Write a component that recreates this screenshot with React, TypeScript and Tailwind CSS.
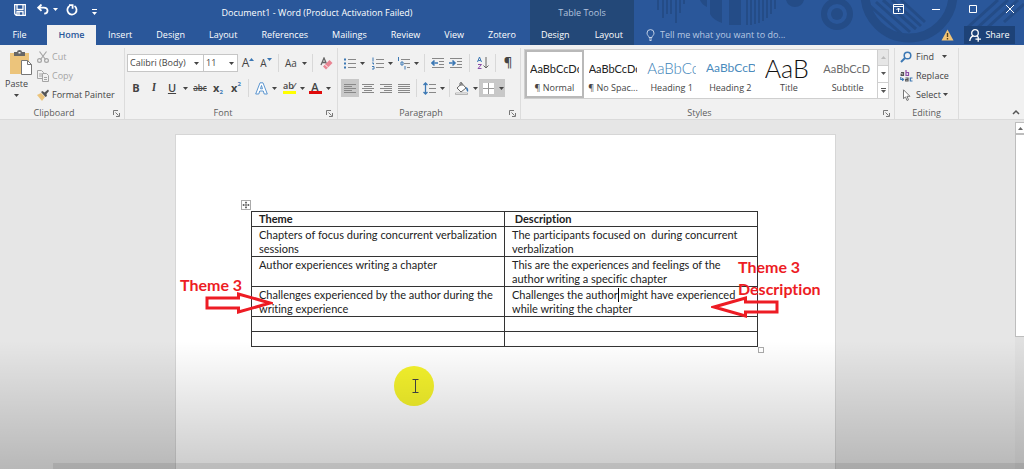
import type { ReactNode } from 'react';
import { clsx } from 'clsx';

/** Small drop-down arrow. */
function Caret({ className }: { className?: string }) {
  return (
    <svg viewBox="0 0 5 3" className={clsx('h-[3px] w-[5px] shrink-0', className)} aria-hidden="true">
      <path d="M0 0h5L2.5 3z" fill="currentColor" />
    </svg>
  );
}

function Tool({
  label,
  className,
  children,
}: {
  label: string;
  className?: string;
  children: ReactNode;
}) {
  return (
    <button
      type="button"
      aria-label={label}
      className={clsx('flex h-[18px] w-[18px] shrink-0 items-center justify-center', className)}
    >
      {children}
    </button>
  );
}

function MoreTool({ label, className }: { label: string; className?: string }) {
  return (
    <button
      type="button"
      aria-label={label}
      className={clsx('flex h-[18px] w-2 shrink-0 items-center justify-center', className)}
    >
      <Caret />
    </button>
  );
}

function Divider({ className }: { className?: string }) {
  return <span className={clsx('h-[18px] w-px shrink-0 bg-[#d8d8d8]', className)} />;
}

/** One ribbon group: content, caption and the optional dialog launcher. */
function Group({
  name,
  launcher,
  className,
  children,
}: {
  name: string;
  launcher?: boolean;
  className?: string;
  children: ReactNode;
}) {
  return (
    <section
      aria-label={name}
      className={clsx('mt-[3px] flex flex-col border-r border-[#dcdcdc]', className)}
    >
      <div className="h-[59px]">{children}</div>
      <div
        className={clsx(
          'relative flex h-3 items-center justify-center text-[#5c5c5c]',
          launcher && 'pr-4',
        )}
      >
        <span>{name}</span>
        {launcher && (
          <button type="button" aria-label={`${name} settings`} className="absolute right-1 bottom-[2px]">
            <svg viewBox="0 0 7 7" className="h-[7px] w-[7px]" fill="none" stroke="#777">
              <path d="M.5 5V.5H5M2.5 2.5l3 3M6.5 3v3.5H3" />
            </svg>
          </button>
        )}
      </div>
    </section>
  );
}

function Lines({ rows }: { rows: [number, number][] }) {
  return (
    <svg viewBox="0 0 12 11" className="h-[11px] w-3" stroke="#888" aria-hidden="true">
      {rows.map(([from, to], i) => (
        <path key={i} d={`M${from} ${i * 2 + 1.5}H${to}`} />
      ))}
    </svg>
  );
}

const TABS = ['Insert', 'Design', 'Layout', 'References', 'Mailings', 'Review', 'View', 'Zotero'];

function Backdrop() {
  return (
    <svg viewBox="0 0 370 45" className="absolute top-0 right-0 h-[45px] w-[370px]" fill="none" aria-hidden="true">
      <g stroke="#244c87" strokeWidth="2">
        <path d="M4 0v10M9 0v18M13 0v14M17 0v14M22 0v23M26 0v13M30 0v4" />
        <path d="M93 0v25M97 0v25M101 0v24M105 0v23M109 0v21M113 0v18M117 0v14M121 0v9" />
      </g>
      <path d="M46 0h7v7q-5-2-7-7zM56 0h12v23q-9-3-12-9zM75 0h12v25H75zM132 0h18q-2 7-9 7t-9-7z" fill="#244c87" />
      <circle cx="183" cy="14" r="13" stroke="#244c87" strokeWidth="6" />
      <circle cx="183" cy="14" r="6" fill="#244c87" />
      <circle cx="255" cy="-6" r="44" stroke="#244c87" strokeWidth="9" />
      <path
        d="M216 6l34 30M222 2l34 30M229 0l33 29M238 0l29 26M247 0l24 22"
        stroke="#244c87"
        strokeWidth="3"
      />
      <path d="M314 27L344 0M322 29L354 0M334 27L364 0M350 22L370 4" stroke="#244c87" strokeWidth="3" />
    </svg>
  );
}

function TitleBar() {
  return (
    <header className="relative flex h-[45px] overflow-hidden bg-[#2a579a] text-white">
      <Backdrop />
      <div className="relative flex w-[530px] shrink-0 flex-col">
        <div className="flex h-[25px] items-center">
          <div className="flex w-[104px] shrink-0 items-center pb-[6px] pl-[14px]">
            <button type="button" aria-label="Save">
              <svg viewBox="0 0 12 12" className="h-3 w-3" fill="none" stroke="#fff" strokeWidth="1.3">
                <path d="M.7.7h10.6v10.6H2.2L.7 9.8zM3 .7v4.6h6V.7M3 11V7.5h6V11M5 8v3" />
              </svg>
            </button>
            <button type="button" aria-label="Undo" className="ml-[11px]">
              <svg viewBox="0 0 12 11" className="h-[11px] w-3" fill="none" stroke="#fff" strokeWidth="1.8">
                <path d="M4.5.5L1.2 3.7l3.3 3.2M1.5 3.7h5.2c5 0 5 5.8.5 6" />
              </svg>
            </button>
            <Caret className="ml-1" />
            <button type="button" aria-label="Repeat" className="ml-2">
              <svg viewBox="0 0 12 12" className="h-3 w-3" fill="none" stroke="#fff" strokeWidth="1.8">
                <path d="M3.6 2A4.6 4.6 0 1 0 8.5 2.1M3 1.2h3.6v3.6" />
              </svg>
            </button>
            <button type="button" aria-label="Customize toolbar" className="mt-1 ml-[14px]">
              <svg viewBox="0 0 5 6" className="h-[6px] w-[5px]" fill="#fff">
                <path d="M0 0h5v1H0zM0 3h5L2.5 6z" />
              </svg>
            </button>
          </div>
          <h1 className="flex-1 text-center font-medium">Document1 - Word (Product Activation Failed)</h1>
        </div>
        <nav className="flex h-5 font-medium">
          <button type="button" className="w-[47px] pr-2 text-center">File</button>
          <button type="button" className="w-[49px] bg-[#f1f1f1] text-center font-semibold text-[#2a579a]">
            Home
          </button>
          <div className="flex flex-1 justify-between pr-[14px] pl-3">
            {TABS.map((tab) => (
              <button type="button" key={tab}>{tab}</button>
            ))}
          </div>
        </nav>
      </div>

      <div className="relative flex w-[104px] shrink-0 flex-col bg-[#234878]">
        <div className="flex h-[25px] items-center justify-center text-[#b3c4de]">Table Tools</div>
        <div className="flex h-5 justify-between px-[11px] font-medium">
          <button type="button">Design</button>
          <button type="button">Layout</button>
        </div>
      </div>

      <div className="relative flex flex-1 flex-col">
        <div className="flex h-[25px] items-start justify-end gap-[27px] pt-1 pr-[9px]">
          <button type="button" aria-label="Ribbon display options">
            <svg viewBox="0 0 11 10" className="h-[10px] w-[11px]" fill="none" stroke="#fff">
              <path d="M.5.5h10v9H.5zM.5 2.5h10M5.5 8V4M3.5 6l2-2 2 2" />
            </svg>
          </button>
          <button type="button" aria-label="Minimize">
            <svg viewBox="0 0 10 10" className="h-[10px] w-[10px]" stroke="#fff">
              <path d="M1 5.5h8" />
            </svg>
          </button>
          <button type="button" aria-label="Maximize">
            <svg viewBox="0 0 10 10" className="h-[10px] w-[10px]" fill="none" stroke="#fff">
              <path d="M1.5 1.5h7v7h-7z" />
            </svg>
          </button>
          <button type="button" aria-label="Close">
            <svg viewBox="0 0 10 10" className="h-[10px] w-[10px]" stroke="#fff">
              <path d="M1 1l8 8M9 1L1 9" />
            </svg>
          </button>
        </div>
        <div className="flex h-5 items-center pr-[9px] pl-3 font-medium">
          <svg viewBox="0 0 9 12" className="h-3 w-[9px] shrink-0" fill="none" stroke="#c3d1e6" aria-hidden="true">
            <path d="M3 8.5C3 7 1 6.3 1 4.1a3.5 3.5 0 0 1 7 0C8 6.3 6 7 6 8.5zM3 10h3M3.5 11.5h2" />
          </svg>
          <input
            aria-label="Tell me what you want to do"
            placeholder="Tell me what you want to do..."
            className="ml-[5px] min-w-0 flex-1 bg-transparent outline-none placeholder:text-[#b7c8e2]"
          />
          <svg viewBox="0 0 13 12" className="mr-[10px] h-3 w-[13px] shrink-0" role="img" aria-label="Warning">
            <path d="M6.5.5L12.5 11.5H.5z" fill="#f3c577" />
            <path d="M6.5 4v4M6.5 9v1.5" stroke="#57421c" strokeWidth="1.4" />
          </svg>
          <button
            type="button"
            className="flex h-[18px] w-[51px] shrink-0 items-center justify-center gap-1 bg-[#1d4277]"
          >
            <svg viewBox="0 0 12 13" className="h-[13px] w-3" fill="none" stroke="#fff" strokeWidth="1.3">
              <circle cx="6" cy="4" r="3.3" />
              <path d="M4.2 6.8C2 7.6 1 9.5.8 12M7.8 7l1 .8M6.5 10.2H12M9.2 7.6v5.2" />
            </svg>
            Share
          </button>
        </div>
      </div>
    </header>
  );
}

function ClipboardGroup() {
  return (
    <Group name="Clipboard" launcher className="w-[125px] shrink-0">
      <div className="flex">
        <button type="button" className="flex w-[33px] flex-col items-center pt-[2px]">
          <svg viewBox="0 0 24 26" className="ml-2 h-[26px] w-6" aria-hidden="true">
            <path d="M1 3h19v21H1z" fill="#ecc47b" />
            <path d="M5 2h3q0-2 2.500-2T13 2h3v4H5z" fill="#666" />
            <path d="M9.5 2h2v1.500h-2z" fill="#eee" />
            <path d="M12.5 10.5h6l4 4v10h-10z" fill="#fff" stroke="#777" />
            <path d="M18.5 10.5v4h4" fill="none" stroke="#777" />
          </svg>
          <span className="pt-[2px] leading-3">Paste</span>
          <Caret className="mt-[4px]" />
        </button>
        <div className="flex flex-col pt-[1px] pl-1">
          <button type="button" className="flex h-[19px] items-center gap-[3px] pb-1 text-[#a5a5a5]">
            <svg viewBox="0 0 12 12" className="h-3 w-3" fill="none" stroke="currentColor" strokeWidth="1.2">
              <path d="M2.5.5l6 8M9.5.5l-6 8" />
              <circle cx="2.5" cy="9.5" r="1.9" />
              <circle cx="9.5" cy="9.5" r="1.9" />
            </svg>
            Cut
          </button>
          <button type="button" className="flex h-[19px] items-center gap-[3px] pb-1 text-[#a5a5a5]">
            <svg viewBox="0 0 12 12" className="h-3 w-3" fill="#f1f1f1" stroke="currentColor">
              <path d="M.5.5h4l2 2v6h-6zM2 4h3M2 6h3" />
              <path d="M5.5 3.5h4l2 2v6h-6zM7 7.5h3M7 9.5h3" />
            </svg>
            Copy
          </button>
          <button type="button" className="flex h-[19px] items-center gap-[3px] pb-1">
            <svg viewBox="0 0 12 12" className="h-3 w-3">
              <path d="M0 6l4-2 4 4-3 4z" fill="#ecc47b" />
              <path d="M4 3l1.500-1 2 1.500L11 .5 12 2 9.500 5l.5 2-1.500 1z" fill="#555" />
            </svg>
            Format Painter
          </button>
        </div>
      </div>
    </Group>
  );
}

function FontGroup() {
  return (
    <Group name="Font" launcher className="w-[213px] shrink-0">
      <div className="flex items-center pt-[6px] pl-[2px]">
        <div className="relative h-[18px] w-[77px] border border-[#c6c6c6] bg-white">
          <select aria-label="Font" className="h-full w-full appearance-none pl-[2px] outline-none">
            <option>Calibri (Body)</option>
          </select>
          <Caret className="pointer-events-none absolute top-[7px] right-1" />
        </div>
        <div className="relative -ml-px h-[18px] w-[35px] border border-[#c6c6c6] bg-white">
          <select aria-label="Font size" className="h-full w-full appearance-none pl-[2px] outline-none">
            <option>11</option>
          </select>
          <Caret className="pointer-events-none absolute top-[7px] right-[3px]" />
        </div>
        <Tool label="Grow font" className="ml-[1px] text-[12px]">
          A<Caret className="mb-2 rotate-180 text-[#3c78b4]" />
        </Tool>
        <Tool label="Shrink font" className="text-[10px]">
          A<Caret className="mb-2 text-[#3c78b4]" />
        </Tool>
        <Divider className="mx-[3px]" />
        <Tool label="Change case" className="text-[10px]">Aa</Tool>
        <MoreTool label="Case options" />
        <Divider className="mx-[4px]" />
        <Tool label="Clear formatting">
          <svg viewBox="0 0 13 13" className="h-[13px] w-[13px]">
            <path d="M1 8l3-7 3 7M2 5.5h4" fill="none" stroke="#666" strokeWidth="1.3" />
            <path d="M3 9.5l6.500-6.500 3 3-6.500 6.500z" fill="#e98593" />
            <path d="M5 7.5l3 3" stroke="#fff" />
          </svg>
        </Tool>
      </div>
      <div className="flex items-center pt-[7px] pl-[2px] text-[11px]">
        <Tool label="Bold" className="font-bold">B</Tool>
        <Tool label="Italic" className="font-serif font-semibold italic">I</Tool>
        <Tool label="Underline" className="font-semibold underline">U</Tool>
        <MoreTool label="Underline options" />
        <Tool label="Strikethrough" className="ml-[2px] text-[8px] font-semibold line-through">abc</Tool>
        <Tool label="Subscript" className="font-bold">
          x<span className="mt-2 text-[6px] leading-none text-[#3c78b4]">2</span>
        </Tool>
        <Tool label="Superscript" className="font-bold">
          x<span className="mb-2 text-[6px] leading-none text-[#3c78b4]">2</span>
        </Tool>
        <Divider className="mx-[3px]" />
        <Tool label="Text effects">
          <svg viewBox="0 0 13 13" className="h-[13px] w-[13px]" fill="#fff" stroke="#5b95cf">
            <path d="M.7 12L5 .8h3L12.3 12H9.2L8.3 9H4.7L3.8 12zM5.5 6.8h2L6.5 3.5z" />
          </svg>
        </Tool>
        <MoreTool label="Effect options" />
        <Tool label="Highlight" className="ml-[2px] flex-col">
          <span className="h-[9px] text-[9px] leading-[8px] font-semibold">ab⁄</span>
          <span className="h-[3px] w-[13px] bg-[#ffff00]" />
        </Tool>
        <MoreTool label="Highlight colours" />
        <Tool label="Font colour" className="flex-col">
          <span className="h-[9px] leading-[9px] font-semibold">A</span>
          <span className="h-[3px] w-[13px] bg-[#e00b0b]" />
        </Tool>
        <MoreTool label="Font colours" />
      </div>
    </Group>
  );
}

function ListIcon({ kind }: { kind: 'bullets' | 'numbers' | 'levels' }) {
  return (
    <svg viewBox="0 0 13 13" className="h-[13px] w-[13px]" aria-hidden="true">
      {kind === 'levels' ? (
        <>
          <path d="M4 2.5h9M7 6.5h6M10 10.5h3" stroke="#888" />
          <path d="M1.5 0v4M4 5h2v3H4zM8 9v3.5" fill="none" stroke="#3c78b4" />
        </>
      ) : (
        <>
          <path d="M5 2.5h8M5 6.5h8M5 10.5h8" stroke="#888" />
          <path
            d={kind === 'bullets' ? 'M1 2.5h2M1 6.5h2M1 10.5h2' : 'M2 .5v4M1 6h1.5v1.5M1 9.5h2v2.5H1'}
            fill="none"
            stroke="#3c78b4"
            strokeWidth={kind === 'bullets' ? 2 : 1}
          />
        </>
      )}
    </svg>
  );
}

function IndentIcon({ increase }: { increase?: boolean }) {
  return (
    <svg viewBox="0 0 14 12" className="h-3 w-[14px]" fill="none" aria-hidden="true">
      <path d="M1 1.5h12M8 4.5h5M8 7.5h5M1 10.5h12" stroke="#888" />
      <path
        d={increase ? 'M0 6h6M3.5 3.5L6 6 3.500 8.500' : 'M1 6h6M3.5 3.5L1 6l2.500 2.500'}
        stroke="#3c78b4"
        strokeWidth="1.6"
      />
    </svg>
  );
}

function ParagraphGroup() {
  return (
    <Group name="Paragraph" launcher className="w-[183px] shrink-0">
      <div className="flex items-center pt-[6px] pl-[2px]">
        <Tool label="Bullets"><ListIcon kind="bullets" /></Tool>
        <MoreTool label="Bullet options" />
        <Tool label="Numbering" className="ml-[2px]"><ListIcon kind="numbers" /></Tool>
        <MoreTool label="Numbering options" />
        <Tool label="Multilevel list"><ListIcon kind="levels" /></Tool>
        <MoreTool label="List options" />
        <Divider className="mx-[4px]" />
        <Tool label="Decrease indent"><IndentIcon /></Tool>
        <Tool label="Increase indent"><IndentIcon increase /></Tool>
        <Divider className="mx-[4px]" />
        <Tool label="Sort">
          <svg viewBox="0 0 12 14" className="h-[14px] w-3" fill="none">
            <path d="M.5 6l2-5 2 5M1.2 4.5h2.6" stroke="#3c78b4" />
            <path d="M1 8.5h3.500L1 12.500h3.500" stroke="#8c4fa8" />
            <path d="M9 1v11M6.5 9.5L9 12l2.500-2.500" stroke="#666" />
          </svg>
        </Tool>
        <Divider className="mx-[3px]" />
        <Tool label="Show marks" className="text-[13px] font-semibold">¶</Tool>
      </div>
      <div className="flex items-center pt-[7px] pl-[3px]">
        <Tool label="Align left" className="bg-[#c8c8c8]">
          <Lines rows={[[0, 12], [0, 8], [0, 12], [0, 8], [0, 12]]} />
        </Tool>
        <Tool label="Center"><Lines rows={[[0, 12], [2, 10], [0, 12], [2, 10], [0, 12]]} /></Tool>
        <Tool label="Align right"><Lines rows={[[0, 12], [4, 12], [0, 12], [4, 12], [0, 12]]} /></Tool>
        <Tool label="Justify"><Lines rows={[[0, 12], [0, 12], [0, 12], [0, 12], [0, 12]]} /></Tool>
        <Divider className="mx-[3px]" />
        <Tool label="Line spacing">
          <svg viewBox="0 0 13 13" className="h-[13px] w-[13px]" fill="none">
            <path d="M6 2.5h7M6 6.5h7M6 10.5h7" stroke="#888" />
            <path d="M2.5 1v11M.5 3l2-2 2 2M.5 10l2 2 2-2" stroke="#3c78b4" strokeWidth="1.3" />
          </svg>
        </Tool>
        <MoreTool label="Spacing options" />
        <Divider className="mx-[3px]" />
        <Tool label="Shading">
          <svg viewBox="0 0 14 13" className="h-[13px] w-[14px]">
            <path d="M2 6l5-4.500 4 4.500-5 4z" fill="#fff" stroke="#666" />
            <path d="M5 4V1q1-1 2 0v3" fill="none" stroke="#666" />
            <path d="M11 5q3 1 2 5-2-1-2-5" fill="#3c78b4" />
            <path d="M.5 11h12v1.500H.5z" fill="#fff" stroke="#999" strokeWidth=".7" />
          </svg>
        </Tool>
        <MoreTool label="Shading colours" />
        <div className="flex bg-[#c8c8c8]">
          <Tool label="Borders">
            <svg viewBox="0 0 11 11" className="h-[11px] w-[11px]">
              <path d="M0 0h11v11H0z" fill="#fff" />
              <path d="M5.5 0v11M0 5.5h11" stroke="#999" />
            </svg>
          </Tool>
          <MoreTool label="Border options" />
        </div>
      </div>
    </Group>
  );
}

const STYLES = [
  { name: '¶ Normal', sample: 'AaBbCcDc', look: 'text-[11px] text-[#222]' },
  { name: '¶ No Spac...', sample: 'AaBbCcDc', look: 'text-[11px] text-[#222]' },
  { name: 'Heading 1', sample: 'AaBbCc', look: 'text-[15px] font-light text-[#3d83b8]' },
  { name: 'Heading 2', sample: 'AaBbCcD', look: 'text-[12px] text-[#4a8bbd]' },
  { name: 'Title', sample: 'AaB', look: 'text-[25px] font-light text-[#111]' },
  { name: 'Subtitle', sample: 'AaBbCcD', look: 'text-[11px] text-[#6a6a6a]' },
];

function StylesGroup() {
  return (
    <Group name="Styles" launcher className="min-w-0 flex-1">
      <div className="mt-[1px] mr-[5px] ml-[3px] flex h-[50px] border border-[#cfcfcf] bg-white">
        <div className="grid min-w-0 flex-1 grid-cols-6">
          {STYLES.map((style, i) => (
            <button
              type="button"
              key={style.name}
              className={clsx(
                'flex min-w-0 flex-col items-center border-2 px-[3px] pt-[2px]',
                i === 0 ? 'border-[#b9b9b9]' : 'border-transparent',
              )}
            >
              <span
                className={clsx(
                  'flex h-7 w-full items-center overflow-hidden font-[Lato,sans-serif] leading-none whitespace-nowrap',
                  style.look,
                )}
              >
                {style.sample}
              </span>
              <span className="leading-[12px] whitespace-nowrap">{style.name}</span>
            </button>
          ))}
        </div>
        <div className="flex w-[11px] flex-col border-l border-[#cfcfcf] text-[#555]">
          <button
            type="button"
            aria-label="Previous styles"
            className="flex flex-1 items-center justify-center bg-[#e6e6e6] text-[#bbb]"
          >
            <Caret className="rotate-180" />
          </button>
          <button
            type="button"
            aria-label="Next styles"
            className="flex flex-1 items-center justify-center border-y border-[#cfcfcf]"
          >
            <Caret />
          </button>
          <button
            type="button"
            aria-label="All styles"
            className="flex flex-1 flex-col items-center justify-center gap-[1px]"
          >
            <span className="h-px w-[5px] bg-[#555]" />
            <Caret />
          </button>
        </div>
      </div>
    </Group>
  );
}

function EditingGroup() {
  return (
    <Group name="Editing" className="w-16 shrink-0">
      <div className="flex flex-col pl-[5px]">
        <button type="button" className="flex h-[19px] items-center gap-1 pb-[2px]">
          <svg viewBox="0 0 12 12" className="h-3 w-3" fill="none" stroke="#3c78b4" strokeWidth="1.5">
            <circle cx="7.5" cy="4.5" r="3.3" />
            <path d="M5 7L1 11" strokeWidth="2" />
          </svg>
          Find
          <Caret className="ml-1" />
        </button>
        <button type="button" className="flex h-[19px] items-center gap-1 pb-[2px]">
          <svg viewBox="0 0 13 12" className="h-3 w-[13px]" fill="none" strokeWidth="1.2" aria-hidden="true">
            <path d="M1 2.5h2.500v3H1.200V4h2.300" stroke="#555" />
            <path d="M6 0v5.500h2.500v-3H6" stroke="#8c4fa8" />
            <path d="M5.500 8h2.500v3H5.700V9.500H8" stroke="#555" />
            <path d="M12.500 8H10.300v3h2.200M.8 7v2.500h2.500M2.200 8.300l1.300 1.200-1.300 1.200" stroke="#3c78b4" />
          </svg>
          <span className="-ml-px">Replace</span>
        </button>
        <button type="button" className="flex h-[19px] items-center gap-1 pb-[2px]">
          <svg viewBox="0 0 12 12" className="h-3 w-3" fill="#fff" stroke="#777">
            <path d="M3.5.8v9l2-2 1.500 3.700 1.500-.7L7 7.300h3z" />
          </svg>
          <span>Select</span>
          <Caret className="-ml-[2px]" />
        </button>
      </div>
    </Group>
  );
}

/** Outlined block arrow drawn by hand over the table. */
function Arrow({ flip, className }: { flip?: boolean; className?: string }) {
  return (
    <svg
      viewBox="0 0 68 24"
      className={clsx('absolute h-6 w-[68px]', flip && '-scale-x-100', className)}
      fill="none"
      stroke="#ed1c24"
      strokeWidth="3"
      aria-hidden="true"
    >
      <path d="M2 7h31.500V3L65 12 33.500 21V17H2z" />
    </svg>
  );
}

const HEAD_CELL = 'border border-[#333] px-[7px] py-0 text-left align-top';
const CELL = 'border border-[#333] px-[7px] pt-px pb-0 text-left align-top';

function ThemeTable() {
  return (
    <table className="w-full table-fixed border-collapse text-[11px] leading-[14px] text-[#222]">
      <thead>
        <tr className="h-[15px]">
          <th className={HEAD_CELL}>Theme</th>
          <th className={HEAD_CELL}>&nbsp;Description</th>
        </tr>
      </thead>
      <tbody>
        <tr className="h-[30px]">
          <td className={CELL}>Chapters of focus during concurrent verbalization sessions</td>
          <td className={CELL}>The participants focused on&nbsp; during concurrent verbalization</td>
        </tr>
        <tr className="h-[30px]">
          <td className={CELL}>Author experiences writing a chapter</td>
          <td className={CELL}>This are the experiences and feelings of the author writing a specific chapter</td>
        </tr>
        <tr className="h-[30px]">
          <td className={CELL}>Challenges experienced by the author during the writing experience</td>
          <td className={CELL}>
            Challenges the author
            <span className="relative">
              <span className="absolute top-0 left-0 h-[14px] w-px bg-black" />
            </span>{' '}
            might have experienced while writing the chapter
          </td>
        </tr>
        <tr className="h-[15px]">
          <td className={CELL} />
          <td className={CELL} />
        </tr>
        <tr className="h-[15px]">
          <td className={CELL} />
          <td className={CELL} />
        </tr>
      </tbody>
    </table>
  );
}

function DocumentArea() {
  return (
    <main className="relative flex flex-1 overflow-hidden bg-[#e6e6e6]">
      <div className="flex flex-1 justify-center pt-[14px] pr-1">
        <article className="relative w-full max-w-[661px] border border-b-0 border-[#d6d6d6] bg-white pt-[76px] pr-[77px] pl-[75px] font-[Lato,sans-serif] [font-variant-ligatures:none]">
          <div className="relative">
            <ThemeTable />
            <button
              type="button"
              aria-label="Move table"
              className="absolute -top-[11px] -left-[10px] flex h-[10px] w-[10px] items-center justify-center border border-[#aaa] bg-white"
            >
              <svg viewBox="0 0 8 8" className="h-2 w-2 shrink-0" stroke="#555" fill="none">
                <path d="M4 .5v7M.5 4h7M3 1.5h2M3 6.5h2M1.5 3v2M6.5 3v2" strokeWidth=".8" />
              </svg>
            </button>
            <span className="absolute -right-[6px] -bottom-[6px] h-[6px] w-[6px] border border-[#aaa] bg-white" />

            <p className="absolute top-[63px] -left-[71px] text-[16px] leading-[22px] font-bold whitespace-nowrap text-[#ed1c24]">
              Theme 3
            </p>
            <Arrow className="top-[80px] -left-[46px]" />
            <p className="absolute top-[45px] left-[487px] text-[16px] leading-[22px] font-bold text-[#ed1c24]">
              Theme 3<br />
              Description
            </p>
            <Arrow flip className="top-[84px] left-[460px]" />

            {/* pointer with its highlight */}
            <span className="absolute top-[155px] left-[143px] flex h-10 w-10 items-center justify-center rounded-full bg-[#f7f52c] pl-[3px]">
              <svg viewBox="0 0 7 14" className="h-[14px] w-[7px]" stroke="#444" fill="none">
                <path d="M.5.5h6M3.5.5v13M.5 13.5h6" />
              </svg>
            </span>
          </div>
        </article>
      </div>

      <div className="mt-[2px] flex w-[9px] shrink-0 flex-col overflow-hidden bg-[#e0e0e0] text-[#666]">
        <button
          type="button"
          aria-label="Scroll up"
          className="flex h-3 items-center justify-center border-y border-l border-[#bdbdbd] bg-white"
        >
          <Caret className="rotate-180" />
        </button>
        <div className="h-[203px] border-y border-l border-[#bdbdbd] bg-white" />
      </div>

      <div className="pointer-events-none absolute inset-x-0 bottom-0 h-[128px] bg-linear-to-b from-black/0 to-black/20">
        <div className="absolute right-0 bottom-0 left-[53px] h-[6px] bg-black/8" />
      </div>
    </main>
  );
}

export default function App() {
  return (
    <div className="flex min-h-screen flex-col overflow-hidden font-['Open_Sans',sans-serif] text-[9px] text-[#444]">
      <TitleBar />
      <div className="flex h-[75px] border-b border-[#dadada] bg-[#f1f1f1]" role="toolbar" aria-label="Home ribbon">
        <ClipboardGroup />
        <FontGroup />
        <ParagraphGroup />
        <StylesGroup />
        <EditingGroup />
        <div className="flex w-[65px] shrink-0 items-end justify-end pr-1 pb-1">
          <button type="button" aria-label="Collapse ribbon">
            <svg viewBox="0 0 8 6" className="h-[6px] w-2" fill="none" stroke="#555" strokeWidth="1.5">
              <path d="M1 5l3-3 3 3" />
            </svg>
          </button>
        </div>
      </div>
      <DocumentArea />
    </div>
  );
}
